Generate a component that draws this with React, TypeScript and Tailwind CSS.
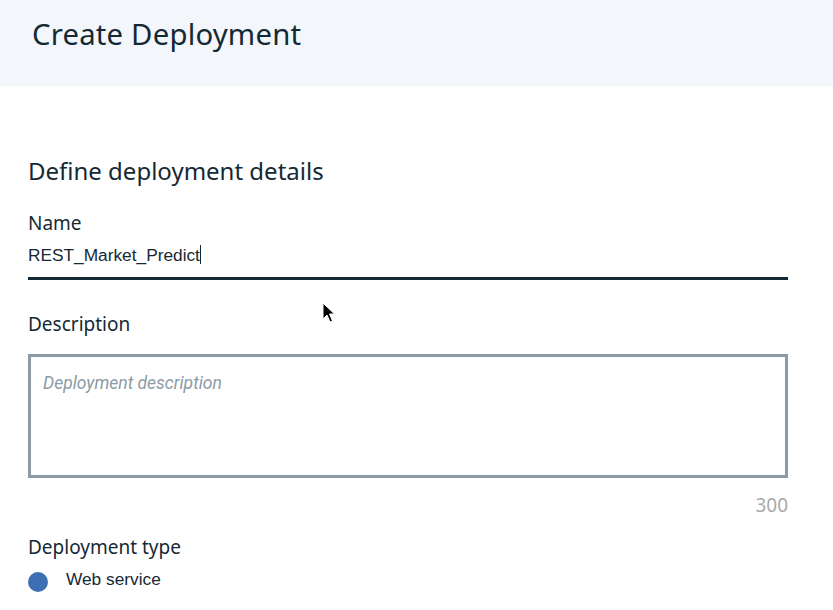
const Cursor = () => (
  <svg
    className="absolute left-[322px] top-[302px]"
    width="14"
    height="22"
    viewBox="0 0 14 22"
  >
    <path
      d="M1 1 L1 17 L5 13 L8 20 L10.5 19 L7.5 12 L12.5 12 Z"
      fill="#000"
      stroke="#fff"
      strokeWidth="1"
    />
  </svg>
);

const Label = ({ className, children }: { className: string; children: string }) => (
  <label
    className={`block text-[19px] leading-[24px] font-['Noto_Sans',Inter,sans-serif] ${className}`}
  >
    {children}
  </label>
);

export default function App() {
  return (
    <div className="relative w-[833px] h-[610px] overflow-hidden bg-white text-[#152935]">
      <header className="h-[86px] bg-[#f3f6fb] pl-[32px] pt-[14px]">
        <h1 className="text-[29.3px] leading-[40px] tracking-[0.2px] font-['Noto_Sans',Inter,sans-serif]">
          Create Deployment
        </h1>
      </header>

      <main className="w-[760px] ml-[28px] pt-[69px]">
        <h2 className="text-[24px] leading-[32px] font-['Noto_Sans',Inter,sans-serif]">
          Define deployment details
        </h2>

        <Label className="mt-[24px]">Name</Label>
        <div className="mt-[10px] h-[35px] flex border-b-[3px] border-[#152935] text-[17.3px] leading-[20px] font-['Liberation_Sans',Arial,sans-serif]">
          <span>REST_Market_Predict</span>
          <span className="w-px h-[19px] bg-[#152935]" />
        </div>

        <Label className="mt-[32px]">Description</Label>
        <div className="mt-[18px] h-[124px] border-[3px] border-[#8c9ba5] px-[12px] pt-[14px]">
          <span className="italic text-[17.5px] leading-[20px] text-[#8c9ba5] font-['Roboto',sans-serif]">
            Deployment description
          </span>
        </div>
        <div className="mt-[15px] text-right text-[19px] leading-[24px] text-[#aaaaaa] font-['Noto_Sans',sans-serif]">
          300
        </div>

        <Label className="mt-[18px]">Deployment type</Label>
        <div className="mt-[13px] flex items-start gap-[18px]">
          <span className="w-[20px] h-[20px] rounded-full bg-[#3d70b2]" />
          <span className="-mt-[3px] text-[17.3px] leading-[20px] font-['Liberation_Sans',Arial,sans-serif]">
            Web service
          </span>
        </div>
      </main>

      <Cursor />
    </div>
  );
}
